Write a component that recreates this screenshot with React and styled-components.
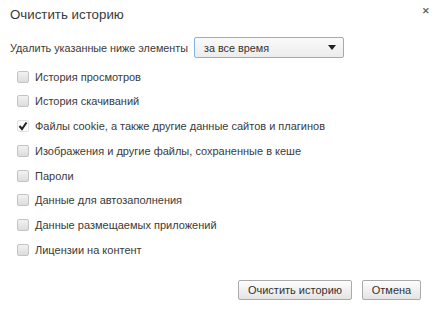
import styled, { createGlobalStyle } from 'styled-components';

const Global = createGlobalStyle`
  html, body { margin: 0; padding: 0; background: #fff; }
  body { font-family: "Liberation Sans", Arial, sans-serif; color: #333; }
`

const Dialog = styled.div`
  width: 434px;
  height: 311px;
  box-sizing: border-box;
  padding: 6px 10px 0 10px;
  position: relative;
  background: #fff;
`

const Title = styled.h1`
  margin: 0;
  font-size: 13.3px;
  font-weight: 400;
  color: #3a3a3a;
  line-height: 18px;
`

const Close = styled.span`
  position: absolute;
  top: 6px;
  right: 4px;
  font-size: 9px;
  font-weight: 700;
  color: #666;
`

const RangeRow = styled.div`
  display: flex;
  align-items: center;
  gap: 6px;
  margin-top: 13px;
  font-size: 10.8px;
  color: #3a3a3a;
`

const Select = styled.div`
  width: 150px;
  height: 21px;
  box-sizing: border-box;
  border: 1px solid #7fb2e5;
  border-radius: 2px;
  background: linear-gradient(#fafafa, #ececec);
  display: flex;
  align-items: center;
  justify-content: space-between;
  padding: 0 7px 0 9px;
  font-size: 10.8px;
  color: #333;
`

const Arrow = styled.span`
  width: 0;
  height: 0;
  border-left: 4px solid transparent;
  border-right: 4px solid transparent;
  border-top: 5px solid #222;
`

const List = styled.ul`
  list-style: none;
  margin: 12px 0 0 0;
  padding: 0 0 0 7px;
  display: flex;
  flex-direction: column;
  gap: 11.8px;
`

const Item = styled.li`
  display: flex;
  align-items: center;
  gap: 6px;
  height: 13px;
  font-size: 11px;
  color: #3a3a3a;
`

const Box = styled.span`
  width: 10px;
  height: 10px;
  border: 1px solid ${p => (p.$checked ? '#e2e2e2' : '#c4c4c4')};
  border-radius: 2px;
  background: ${p => (p.$checked ? '#fafafa' : 'linear-gradient(#f2f2f2, #dcdcdc)')};
  display: flex;
  align-items: center;
  justify-content: center;
`

const Footer = styled.div`
  display: flex;
  justify-content: flex-end;
  gap: 10px;
  margin-top: 23px;
  padding-right: 3px;
`

const Button = styled.button`
  height: 20px;
  width: ${p => p.$w}px;
  padding: 0;
  border: 1px solid #aaa;
  border-radius: 2px;
  background: linear-gradient(#fdfdfd, #e4e4e4);
  font-family: "Liberation Sans", Arial, sans-serif;
  font-size: 11px;
  color: #333;
`

const items = [
  ['История просмотров', false],
  ['История скачиваний', false],
  ['Файлы cookie, а также другие данные сайтов и плагинов', true],
  ['Изображения и другие файлы, сохраненные в кеше', false],
  ['Пароли', false],
  ['Данные для автозаполнения', false],
  ['Данные размещаемых приложений', false],
  ['Лицензии на контент', false],
]

const Check = () => (
  <svg width="10" height="10" viewBox="0 0 10 10">
    <path d="M1.5 5 L4 8 L8.5 1.5" fill="none" stroke="#222" strokeWidth="2" />
  </svg>
)

const App = () => (
  <Dialog>
    <Global />
    <Title>Очистить историю</Title>
    <Close>✕</Close>
    <RangeRow>
      Удалить указанные ниже элементы
      <Select>
        за все время
        <Arrow />
      </Select>
    </RangeRow>
    <List>
      {items.map(([label, checked]) => (
        <Item key={label}>
          <Box $checked={checked}>{checked && <Check />}</Box>
          {label}
        </Item>
      ))}
    </List>
    <Footer>
      <Button $w={114}>Очистить историю</Button>
      <Button $w={59}>Отмена</Button>
    </Footer>
  </Dialog>
)

export default App;
